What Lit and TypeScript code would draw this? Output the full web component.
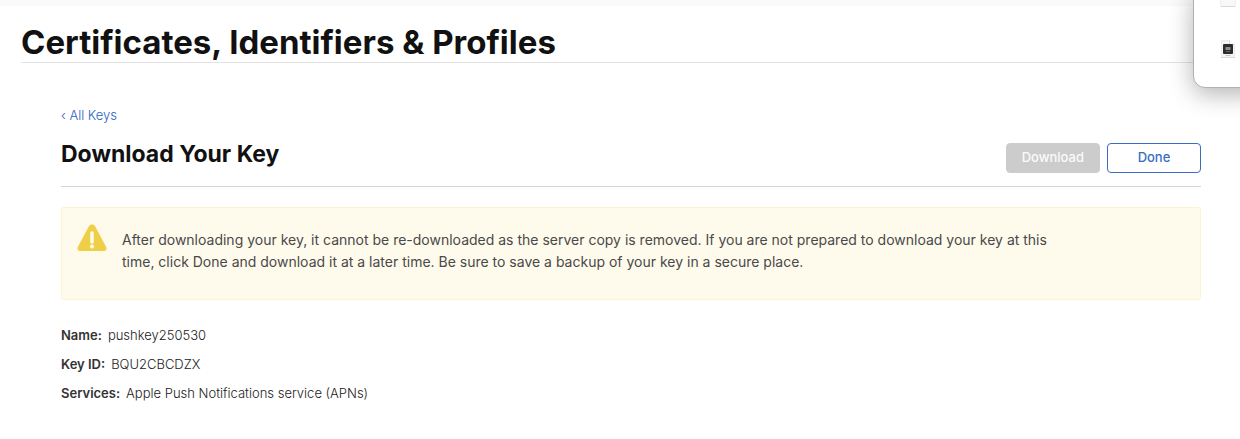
import { LitElement, html, css } from "lit";
import { customElement } from "lit/decorators.js";

@customElement("floating-panel")
class FloatingPanel extends LitElement {
  static styles = css`
    :host {
      position: absolute;
      top: -12px;
      right: -40px;
      width: 87px;
      height: 100px;
      box-sizing: border-box;
      border-radius: 12px;
      background: #fff;
      border: 1px solid #b0b0b0;
      box-shadow: 0 6px 24px rgba(0, 0, 0, 0.3);
    }
    .thumbs {
      display: flex;
      flex-direction: column;
      gap: 32px;
      padding-left: 26px;
    }
    svg {
      display: block;
    }
  `;

  render() {
    return html`<div class="thumbs">
      <svg width="16" height="18" viewBox="0 0 16 18" aria-hidden="true">
        <rect x="0.5" y="0.5" width="15" height="17" rx="1" fill="#f8f8f8" stroke="#ededed" />
        <path d="M1 17.5h14" stroke="#d8d8d8" />
      </svg>
      <svg width="16" height="20" viewBox="0 0 16 20" aria-hidden="true">
        <path d="M1.5 1.5h8l5 4v13h-13z" fill="#f5f5f5" stroke="#ebebeb" />
        <path d="M9.5 1.5v4h5" fill="#fff" stroke="#d8d8d8" />
        <path d="M1 18.5h14" stroke="#dadada" />
        <rect x="3" y="5" width="10" height="10" rx="1" fill="#2b2b2b" />
        <path d="M5.5 8h5v3h-5z" fill="#8c8c8c" />
        <path d="M6 12.5h4" stroke="#666" />
        <path d="M5.5 16.5h5" stroke="#c4c4c4" />
      </svg>
    </div>`;
  }
}

@customElement("app-root")
class AppRoot extends LitElement {
  static styles = css`
    :host {
      display: block;
      position: relative;
      overflow: hidden;
      min-height: 100vh;
      background: #fff;
      color: #111;
      font: 300 13px/20px Inter, sans-serif;
    }
    .strip {
      height: 6px;
      background: #fafafa;
    }
    .top {
      margin-left: 21px;
      padding-top: 16px;
      border-bottom: 1px solid #e3e3e3;
    }
    h1 {
      margin: 0;
      font-size: 33px;
      line-height: 40px;
      font-weight: 700;
    }
    main {
      margin: 42px 39px 0 61px;
    }
    a {
      color: #2a63c0;
      text-decoration: none;
    }
    .heading {
      display: flex;
      justify-content: space-between;
      margin-top: 12px;
      padding-bottom: 13px;
      border-bottom: 1px solid #d6d6d6;
    }
    h2 {
      margin: 0;
      font-size: 23px;
      line-height: 34px;
      font-weight: 700;
    }
    .actions {
      display: flex;
      gap: 7px;
      padding-top: 6px;
    }
    button {
      min-width: 94px;
      height: 30px;
      border: 1px solid #3a6cc6;
      border-radius: 4px;
      padding: 0 15px 2px;
      background: #fff;
      color: #3a6cc6;
      font: 500 13px/20px Inter, sans-serif;
    }
    button:disabled {
      background: #ccc;
      border-color: #ccc;
      color: #fafafa;
    }
    .notice {
      display: flex;
      gap: 15px;
      margin-top: 20px;
      padding: 16px 16px 26px 15px;
      border: 1px solid #fcf3cf;
      border-radius: 3px;
      background: #fffbec;
    }
    .notice svg {
      flex: none;
    }
    .notice p {
      margin: 5px 0 0;
      max-width: 940px;
      font-size: 14px;
      line-height: 22px;
      font-weight: 400;
      color: #494949;
    }
    dl {
      margin: 25px 0 0;
      display: grid;
      gap: 9px;
      color: #222;
    }
    dl div {
      display: flex;
      gap: 6px;
    }
    dt {
      font-weight: 600;
      color: #333;
    }
    dd {
      margin: 0;
    }
  `;

  details = [
    ["Name:", "pushkey250530"],
    ["Key ID:", "BQU2CBCDZX"],
    ["Services:", "Apple Push Notifications service (APNs)"],
  ];

  render() {
    return html`
      <div class="strip"></div>
      <header class="top"><h1>Certificates, Identifiers &amp; Profiles</h1></header>
      <main>
        <a href="#keys">‹ All Keys</a>
        <div class="heading">
          <h2>Download Your Key</h2>
          <div class="actions">
            <button type="button" disabled>Download</button>
            <button type="button">Done</button>
          </div>
        </div>
        <section class="notice">
          <svg width="30" height="28" viewBox="0 0 30 28" aria-hidden="true">
            <path d="M12 2Q15-1.6 18 2L29.2 23Q30.4 27 27 27H3Q-.4 27 .8 23Z" fill="#f0cf48" />
            <path d="M15 9v9" stroke="#fffdf2" stroke-width="3.4" stroke-linecap="round" />
            <circle cx="15" cy="22.6" r="2" fill="#fffdf2" />
          </svg>
          <p>
            After downloading your key, it cannot be re-downloaded as the server copy is removed. If you are not
            prepared to download your key at this time, click Done and download it at a later time. Be sure to save a
            backup of your key in a secure place.
          </p>
        </section>
        <dl>
          ${this.details.map(([k, v]) => html`<div><dt>${k}</dt><dd>${v}</dd></div>`)}
        </dl>
      </main>
      <floating-panel></floating-panel>
    `;
  }
}
